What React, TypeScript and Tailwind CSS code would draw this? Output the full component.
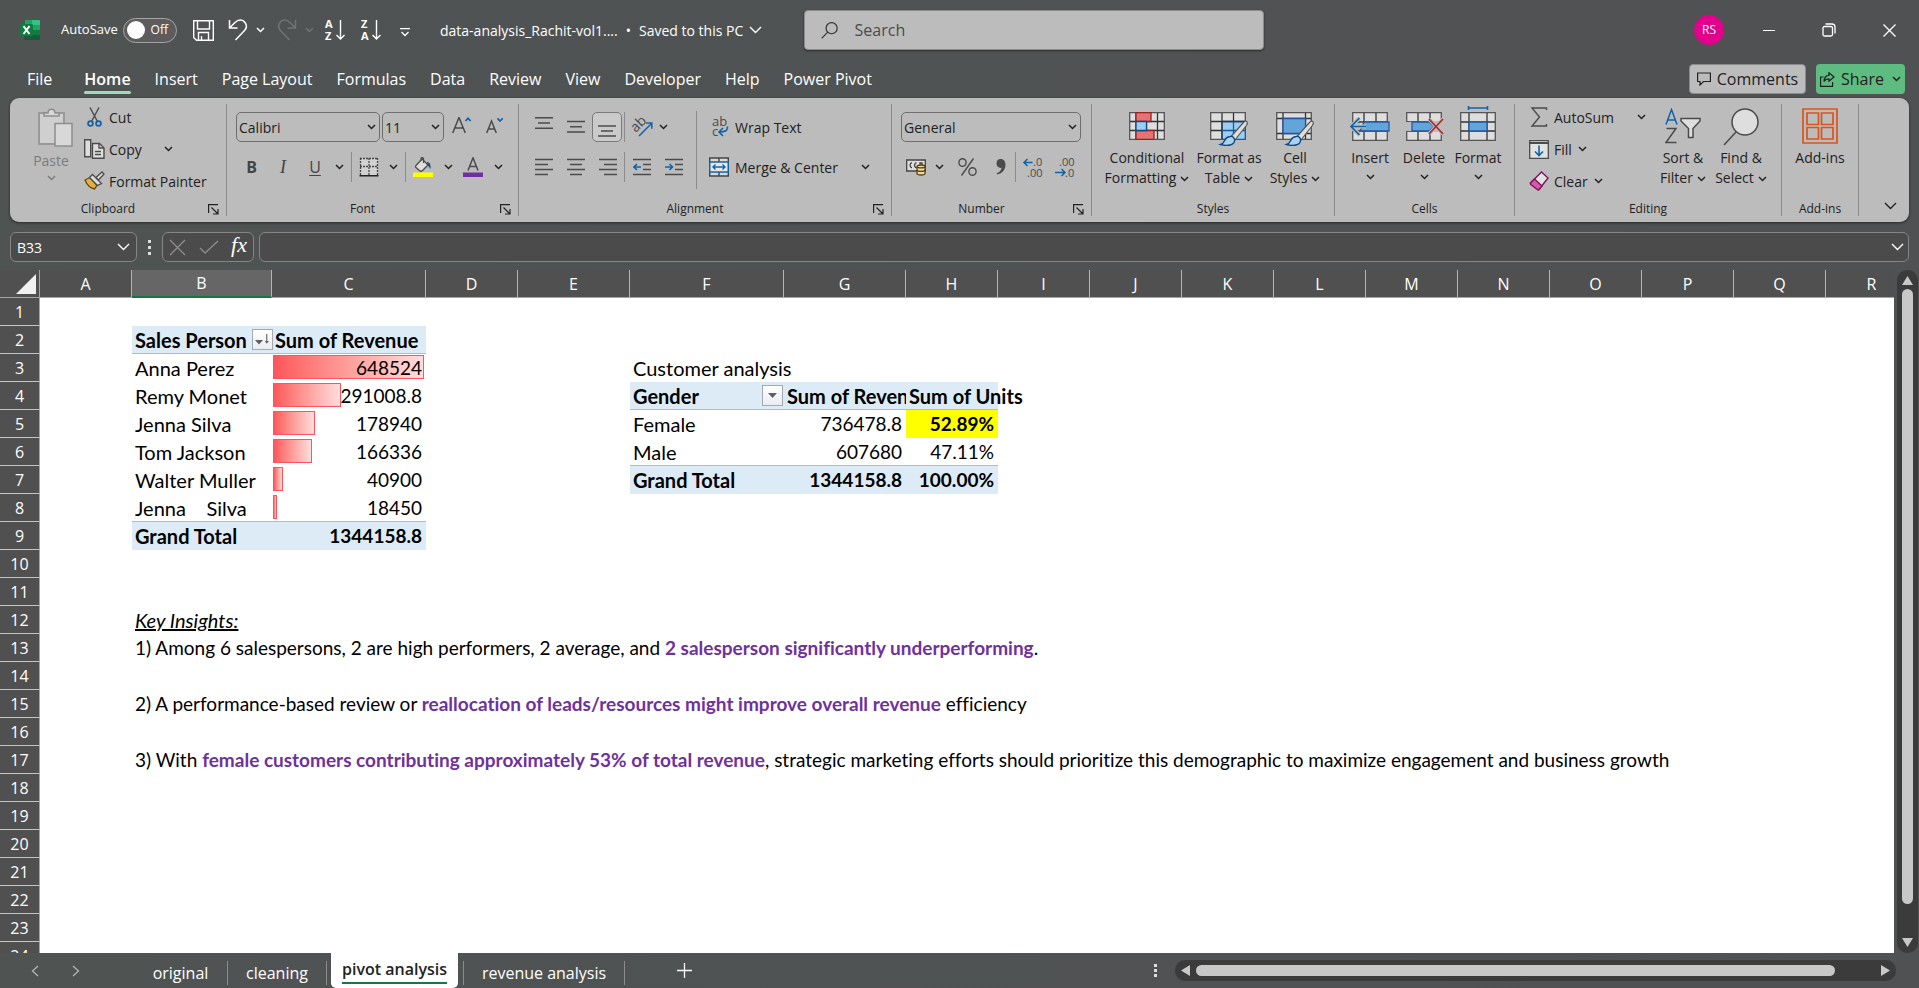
import React from "react";

type Kids = { children?: React.ReactNode };

/* ---------- small shared pieces ---------- */

function Chevron({ className = "" }: { className?: string }) {
  return (
    <svg className={`h-[6px] w-[9px] shrink-0 ${className}`} viewBox="0 0 9 6" fill="none" stroke="currentColor" strokeWidth="1.5">
      <path d="M1 1l3.500 3.500L8 1" />
    </svg>
  );
}

function WideChevron() {
  return (
    <svg className="h-[8px] w-[13px] shrink-0" viewBox="0 0 13 8" fill="none" stroke="currentColor" strokeWidth="1.4">
      <path d="M1 1l5.500 5.500L12 1" />
    </svg>
  );
}

function Divider() {
  return <div className="my-1.5 w-px shrink-0 bg-[#8b8b8b]" />;
}

function Rule() {
  return <div className="h-[30px] w-px shrink-0 bg-[#8b8b8b]" />;
}

function Group({ label, width, launcher, children }: Kids & { label: string; width: string; launcher?: boolean }) {
  return (
    <section aria-label={label} className={`flex shrink-0 flex-col pt-[3px] ${width}`}>
      <div className="flex h-24">{children}</div>
      <div className="flex h-6 items-center text-[12px]">
        <span className="flex-1 text-center">{label}</span>
        {launcher && (
          <button aria-label={`${label} settings`} className="w-5 pr-1">
            <svg className="ml-0.5 h-[11px] w-[11px]" viewBox="0 0 11 11" fill="none" stroke="#222" strokeWidth="1.2">
              <path d="M.6 9V.6H10M3.500 3.500L9.500 9.500M10 5v5H5" />
            </svg>
          </button>
        )}
      </div>
    </section>
  );
}

function Tool({ label, width, children }: Kids & { label: string; width: string }) {
  return (
    <button aria-label={label} className={`flex h-[30px] shrink-0 items-center justify-center ${width}`}>
      {children}
    </button>
  );
}

function Big({ icon, lines, width, drop, below }: { icon: React.ReactNode; lines: string[]; width: string; drop?: boolean; below?: boolean }) {
  return (
    <button className={`flex shrink-0 flex-col items-center pt-[5px] text-[14px] leading-5 ${width}`}>
      <span className="flex h-[42px] items-start">{icon}</span>
      {lines.map((t, i) => (
        <span key={t} className="flex items-center gap-1 whitespace-nowrap">
          {t}
          {drop && i === lines.length - 1 && <Chevron className="mt-px" />}
        </span>
      ))}
      {below && <Chevron className="mt-1.5" />}
    </button>
  );
}

/* ---------- icons ---------- */

function ExcelLogo() {
  return (
    <svg className="h-5 w-5" viewBox="0 0 20 20">
      <path d="M5 0h7v5H5z" fill="#21a366" />
      <path d="M12 0h7a1 1 0 011 1v4h-8z" fill="#33c481" />
      <path d="M4 5h8v5H4z" fill="#107c41" />
      <path d="M12 5h8v5h-8z" fill="#21a366" />
      <path d="M4 10h8v5H4z" fill="#185c37" />
      <path d="M12 10h8v5h-8z" fill="#107c41" />
      <path d="M4 15h16v4a1 1 0 01-1 1H5a1 1 0 01-1-1z" fill="#185c37" />
      <rect y="4" width="13" height="12" rx="1.2" fill="#107c41" />
      <path d="M3.500 6.200l6 7.800M9.500 6.200l-6 7.800" stroke="#fff" strokeWidth="1.900" />
    </svg>
  );
}

function SortIcon({ top, bottom }: { top: string; bottom: string }) {
  return (
    <svg className="h-[22px] w-[22px] overflow-visible" viewBox="0 0 22 22" fill="none" stroke="#fff" strokeWidth="1.4">
      <text x="1" y="9" fontSize="11" fontWeight="700" fill="#fff" stroke="none">{top}</text>
      <text x="1" y="21" fontSize="11" fontWeight="700" fill="#fff" stroke="none">{bottom}</text>
      <path d="M16.500 1v19M12.500 16l4 4 4-4" />
    </svg>
  );
}

function Lines({ rows }: { rows: [number, number, number][] }) {
  return (
    <svg className="h-[20px] w-[18px]" viewBox="0 0 18 20" stroke="#4b4b4b" strokeWidth="1.4">
      {rows.map(([x1, x2, y]) => (
        <path key={y} d={`M${x1} ${y}H${x2}`} />
      ))}
    </svg>
  );
}

function IndentIcon({ right }: { right?: boolean }) {
  return (
    <svg className="h-[20px] w-[18px]" viewBox="0 0 18 20" fill="none" stroke="#4b4b4b" strokeWidth="1.4">
      <path d="M0 2.500h18M10 7.500h8M10 12.500h8M0 17.500h18" />
      <path d={right ? "M0 10h7.500M4.500 7l3 3-3 3" : "M8 10H.8M4 7l-3 3 3 3"} stroke="#1063ab" strokeWidth="1.6" />
    </svg>
  );
}

function Brush() {
  return (
    <>
      <path d="M36 9c2 1 1.500 3 0 5L25 28l-4-3.500L33 11c1-1.200 2-2 3-2z" fill="#dedede" stroke="#555" strokeWidth="1.2" />
      <path d="M20 24.500c3-.5 5 1.500 4.500 4.500-.5 4-7 5.500-14 3.500 3-1 3.500-2.500 4.500-4.500 1-2.200 2.500-3.200 5-3.500z" fill="#a9d2f3" stroke="#104a82" strokeWidth="1.4" />
    </>
  );
}

function CondIcon() {
  return (
    <svg className="mt-1 h-[28px] w-[36px]" viewBox="0 0 36 28" strokeWidth="1.3">
      <path d="M.7.7h34.600v26.600H.7z" fill="#dedede" stroke="#555" />
      <path d="M7 1v26M28.500 1v26M1 9.500h34M1 18.500h34M17.500 10v9" stroke="#333" />
      <path d="M7 .7h15v8.800H7zM7 18.500h18v8.800H7z" fill="#e57373" stroke="#962222" />
      <path d="M7 9.500h10.500v9H7z" fill="#9dcdf2" stroke="#104a82" />
    </svg>
  );
}

function FormatTableIcon() {
  return (
    <svg className="mt-1 h-[34px] w-[38px]" viewBox="0 0 38 34" fill="none" strokeWidth="1.3">
      <path d="M.7.7h34.600v26.600H.7z" fill="#dedede" stroke="#555" />
      <path d="M12 9.500h23.300v17.800H12z" fill="#9dcdf2" stroke="#1a5a96" />
      <path d="M12 1v9M23.500 1v9M1 9.500h34M1 18.500h11M12 9v18" stroke="#333" />
      <path d="M23.500 10v17M12 18.500h23" stroke="#1a5a96" />
      <Brush />
    </svg>
  );
}

function CellStylesIcon() {
  return (
    <svg className="mt-1 h-[34px] w-[38px]" viewBox="0 0 38 34" fill="none" strokeWidth="1.3">
      <path d="M.7.7h34.600v26.600H.7z" fill="#dedede" stroke="#555" />
      <path d="M7 1v26M29.500 1v26M1 6.500h34M1 21.500h34" stroke="#333" />
      <path d="M7 6.500h22.500v15H7z" fill="#62a5d9" stroke="#2b50a8" />
      <Brush />
    </svg>
  );
}

function CellGrid({ kind }: { kind: "insert" | "delete" | "format" }) {
  return (
    <svg className="h-[36px] w-[40px] overflow-visible" viewBox="0 0 40 36" fill="none" strokeWidth="1.3">
      <path d="M2.700 4.700h34.600v27.600H2.700z" fill="#dedede" stroke="#555" />
      {kind === "format" ? (
        <>
          <path d="M11 5v27M29 5v27M3 14h34M3 23h34" stroke="#333" />
          <path d="M11 14h18v9H11z" fill="#62a5d9" stroke="#2459a8" />
          <path d="M10.500-2v4M29.500-2v4M10.500 0h19" stroke="#1063ab" strokeWidth="1.6" />
        </>
      ) : (
        <path d="M14 5v27M26 5v27M3 14h34M3 23h34" stroke="#333" />
      )}
      {kind === "insert" && (
        <>
          <path d="M1 15h9v7H1z" fill="#bcbcbc" />
          <path d="M14 14h25v9H10z" fill="#62a5d9" stroke="#2459a8" />
          <path d="M16 18.500H1M9.500 10L1 18.500 9.500 27" stroke="#bcbcbc" strokeWidth="4" />
          <path d="M16 18.500H1M9.500 10L1 18.500 9.500 27" stroke="#1063ab" strokeWidth="1.700" />
        </>
      )}
      {kind === "delete" && (
        <>
          <path d="M1 14h7v9H1zM29 13h10v11H29z" fill="#bcbcbc" />
          <path d="M8 14h17l5 4.500-5 4.500H8z" fill="#62a5d9" stroke="#2459a8" />
          <path d="M25 11l14 15M39 11L25 26" stroke="#bcbcbc" strokeWidth="4" />
          <path d="M25 11l14 15M39 11L25 26" stroke="#a92b2b" strokeWidth="1.700" />
        </>
      )}
    </svg>
  );
}

/* ---------- title bar ---------- */

function TitleBar() {
  return (
    <header className="flex h-[60px] shrink-0 items-center text-white">
      <div className="flex w-[804px] shrink-0 items-center pl-5">
        <ExcelLogo />
        <label className="ml-[21px] flex items-center gap-2 text-[13px]">
          <span className="w-[54px] whitespace-nowrap">AutoSave</span>
          <input type="checkbox" className="peer sr-only" />
          <span className="flex h-[25px] w-[54px] items-center justify-between rounded-full border border-[#a5a5a5] bg-[#5d5b5b] pl-[3px] pr-2 text-[12px]">
            <span className="h-[18px] w-[18px] rounded-full bg-white" />
            Off
          </span>
        </label>
        <button aria-label="Save" className="ml-4">
          <svg className="h-[21px] w-[21px]" viewBox="0 0 21 21" fill="none" stroke="#fff" strokeWidth="1.4">
            <path d="M.7.7h19.600v19.600H3.500L.7 17.500zM4.500 1v8h12V1M5.500 20v-7.500h10V20M8.500 20v-4" />
          </svg>
        </button>
        <button aria-label="Undo" className="ml-3.5 flex items-center gap-2">
          <svg className="h-[22px] w-[20px]" viewBox="0 0 20 22" fill="none" stroke="#fff" strokeWidth="1.500">
            <path d="M1.500 1v8h8M1.500 9l5.500-5.500c3.500-3.500 8-3 10 0 2 2.800 1.500 6-.5 8L7.500 21" />
          </svg>
          <Chevron />
        </button>
        <button aria-label="Redo" className="ml-3 flex items-center gap-2 text-[#727474]" disabled>
          <svg className="h-[22px] w-[20px]" viewBox="0 0 20 22" fill="none" stroke="currentColor" strokeWidth="1.500">
            <path d="M18.500 1v8h-8M18.500 9L13 3.500c-3.500-3.500-8-3-10 0-2 2.800-1.500 6 .5 8l9 9.500" />
          </svg>
          <Chevron />
        </button>
        <button aria-label="Sort A to Z" className="ml-2.5">
          <SortIcon top="A" bottom="Z" />
        </button>
        <button aria-label="Sort Z to A" className="ml-3.5">
          <SortIcon top="Z" bottom="A" />
        </button>
        <button aria-label="Customize toolbar" className="ml-[18px]">
          <svg className="mt-1 h-[9px] w-[10px]" viewBox="0 0 10 9" fill="none" stroke="#fff" strokeWidth="1.300">
            <path d="M0 .7h10M1.500 4L5 7.500 8.500 4" />
          </svg>
        </button>
        <button className="ml-[30px] flex items-center whitespace-nowrap text-[14px]">
          data-analysis_Rachit-vol1.... <span className="mx-2">•</span> Saved to this PC
          <span className="ml-1.5"><WideChevron /></span>
        </button>
      </div>
      <label className="flex h-10 w-[460px] items-center rounded-[4px] border border-[#8b8b8b] bg-[#bcbcbc] pl-4 shadow-[0_1px_2px_#2d2d2d]">
        <svg className="h-[19px] w-[19px]" viewBox="0 0 19 19" fill="none" stroke="#333" strokeWidth="1.300">
          <circle cx="11.500" cy="7" r="6" />
          <path d="M7.300 11.300L.7 18" />
        </svg>
        <input aria-label="Search" placeholder="Search" className="ml-4 w-full bg-transparent text-[16px] text-[#333] outline-none placeholder:text-[#4b4b4b]" />
      </label>
      <button className="ml-auto mr-[15px] flex h-[30px] w-[30px] items-center justify-center rounded-full bg-[#e3008c] text-[12px]">RS</button>
      <div className="flex">
        <button aria-label="Minimize" className="flex h-10 w-[60px] items-center justify-center">
          <span className="h-px w-3 bg-white" />
        </button>
        <button aria-label="Restore" className="flex h-10 w-[60px] items-center justify-center">
          <svg className="h-[14px] w-[14px]" viewBox="0 0 14 14" fill="none" stroke="#fff" strokeWidth="1.300">
            <rect x="1" y="3.500" width="9.500" height="9.500" rx="1.500" />
            <path d="M3.500 1h6.500a3 3 0 013 3v6.500" />
          </svg>
        </button>
        <button aria-label="Close" className="flex h-10 w-[60px] items-center justify-center">
          <svg className="h-[13px] w-[13px]" viewBox="0 0 13 13" fill="none" stroke="#fff" strokeWidth="1.300">
            <path d="M.5.500l12 12M12.500.500l-12 12" />
          </svg>
        </button>
      </div>
    </header>
  );
}

const menu = ["File", "Home", "Insert", "Page Layout", "Formulas", "Data", "Review", "View", "Developer", "Help", "Power Pivot"];

function MenuBar() {
  return (
    <nav className="flex h-[38px] shrink-0 items-center pl-[15px] pr-[14px] text-white">
      {menu.map((m) => (
        <button key={m} className={`flex flex-col whitespace-nowrap px-3 pt-[3px] text-[16px] leading-6 ${m === "File" ? "mr-2" : ""} ${m === "Home" ? "font-semibold" : ""}`}>
          {m}
          <span className={`h-[3px] w-full rounded-full ${m === "Home" ? "bg-[#9fdcb9]" : ""}`} />
        </button>
      ))}
      <div className="ml-auto flex gap-2.5 text-[16px] text-[#222]">
        <button className="flex h-[30px] w-[117px] items-center justify-center gap-1.5 rounded-[4px] border border-[#8b8b8b] bg-[#bcbcbc]">
          <svg className="h-[14px] w-[14px]" viewBox="0 0 14 14" fill="none" stroke="#222" strokeWidth="1.200">
            <path d="M.6 1h12.800v8.500H6.500L3 13V9.500H.6z" />
          </svg>
          Comments
        </button>
        <button className="flex h-[30px] w-[89px] items-center justify-center gap-1.5 rounded-[4px] bg-[#5fbc80]">
          <svg className="h-[15px] w-[15px]" viewBox="0 0 15 15" fill="none" stroke="#222" strokeWidth="1.200">
            <path d="M3.500 5H.6v9.400h12V10M9 .8l5 4.200-5 4.200V6.800c-2.500 0-4 1-5 2.700.2-4 2-6 5-6.300z" />
          </svg>
          Share
          <Chevron className="ml-0.5" />
        </button>
      </div>
    </nav>
  );
}

/* ---------- ribbon ---------- */

function Picker({ label, value, width }: { label: string; value: string; width: string }) {
  return (
    <div className={`relative h-[30px] shrink-0 ${width}`}>
      <select aria-label={label} defaultValue={value} className="h-full w-full appearance-none rounded-[5px] border border-[#6f6f6f] bg-transparent pl-0.5 text-[14px] text-[#222]">
        <option>{value}</option>
      </select>
      <Chevron className="pointer-events-none absolute right-1 top-3" />
    </div>
  );
}

function Clipboard() {
  return (
    <Group label="Clipboard" width="w-[216px]" launcher>
      <button className="ml-3 flex w-[58px] flex-col items-center pt-[7px] text-[14px] leading-5 text-[#7d7d7d]" disabled>
        <svg className="ml-2 h-[39px] w-[35px]" viewBox="0 0 35 39" stroke="#8e8e8e" strokeWidth="1.500">
          <path d="M1 5h25v31H1z" fill="#cfcfcf" stroke="#999" strokeWidth="2" />
          <path d="M6 8V5h4c0-5 7-5 7 0h4v3z" fill="#d8d8d8" />
          <path d="M17 15.500h17V38H17z" fill="#d8d8d8" />
        </svg>
        <span className="mt-1">Paste</span>
        <Chevron className="mt-1" />
      </button>
      <div className="ml-1 flex flex-col text-[14px]">
        <button className="flex h-8 items-center gap-1">
          <svg className="h-[20px] w-[21px]" viewBox="0 0 21 20" fill="none" stroke="#4b4b4b" strokeWidth="1.400">
            <path d="M6 .5l7.500 14M15 .5L7.500 14.500" />
            <circle cx="6.500" cy="16.500" r="2.400" stroke="#1063ab" strokeWidth="1.800" />
            <circle cx="14.500" cy="16.500" r="2.400" stroke="#1063ab" strokeWidth="1.800" />
          </svg>
          Cut
        </button>
        <button className="flex h-8 items-center gap-1">
          <svg className="h-[20px] w-[21px]" viewBox="0 0 21 20" fill="#dedede" stroke="#4b4b4b" strokeWidth="1.400">
            <path d="M.7.700h6v17h-6z" />
            <path d="M8.500 4.500h7l4.500 4.500v10.300H8.500z" />
            <path d="M15 4.500V9h5M11 12.500h6M11 15.500h6" fill="none" />
          </svg>
          Copy
          <Chevron className="ml-[18px]" />
        </button>
        <button className="flex h-8 items-center gap-1 whitespace-nowrap">
          <svg className="h-[20px] w-[21px]" viewBox="0 0 21 20" strokeWidth="1.300">
            <path d="M1 9l5-2.500 7 8L10.500 18C6 17 3 14 1 9z" fill="#e3b23c" stroke="#6b4a0e" />
            <path d="M5.500 6.500l3-3 9 9-4 2z" fill="#dedede" stroke="#4b4b4b" />
            <path d="M12 6.500L18 1l2 2-5.500 6z" fill="#dedede" stroke="#4b4b4b" />
          </svg>
          Format Painter
        </button>
      </div>
    </Group>
  );
}

function FontGroup() {
  return (
    <Group label="Font" width="w-[291px]" launcher>
      <div className="flex flex-col gap-2.5 pl-[9px] pt-[11px]">
        <div className="flex items-center gap-0.5">
          <Picker label="Font" value="Calibri" width="w-[144px]" />
          <Picker label="Font size" value="11" width="w-[62px]" />
          <Tool label="Increase font size" width="w-8">
            <svg className="h-[20px] w-[20px]" viewBox="0 0 20 20" fill="none" stroke="#4b4b4b" strokeWidth="1.500">
              <path d="M.7 16L7 .5 13.300 16M3 11h8" />
              <path d="M13.500 4L16 1.300 18.700 4" stroke="#1063ab" strokeWidth="1.700" />
            </svg>
          </Tool>
          <Tool label="Decrease font size" width="w-8">
            <svg className="h-[20px] w-[20px]" viewBox="0 0 20 20" fill="none" stroke="#4b4b4b" strokeWidth="1.500">
              <path d="M.7 16L5.500 4 10.300 16M2.500 12h6" />
              <path d="M11.500 1.300L14 4l2.700-2.700" stroke="#1063ab" strokeWidth="1.700" />
            </svg>
          </Tool>
        </div>
        <div className="flex items-center text-[16px] text-[#444]">
          <Tool label="Bold" width="w-[31px]"><b>B</b></Tool>
          <Tool label="Italic" width="w-8"><i className="font-['Liberation_Serif',serif] text-[18px]">I</i></Tool>
          <Tool label="Underline" width="w-8"><u className="underline-offset-2">U</u></Tool>
          <Tool label="Underline options" width="w-[17px]"><Chevron className="text-[#222]" /></Tool>
          <span className="ml-[3px]"><Rule /></span>
          <Tool label="Borders" width="w-[33px]">
            <svg className="h-[20px] w-[20px]" viewBox="0 0 20 20" fill="none" stroke="#444">
              <path d="M1 1h18v17H1z" fill="#d2d2d2" stroke="none" />
              <path d="M1 1.500h18M1 9.500h18M1.500 1v17M10 1v17M18.500 1v17" strokeDasharray="2 1" strokeWidth="1.300" />
              <path d="M.5 18.800h19" stroke="#222" strokeWidth="1.600" />
            </svg>
          </Tool>
          <Tool label="Border options" width="w-[17px]"><Chevron className="text-[#222]" /></Tool>
          <span className="ml-[3px]"><Rule /></span>
          <Tool label="Fill color" width="w-[34px]">
            <svg className="h-[20px] w-[20px]" viewBox="0 0 20 20">
              <path d="M3 8.500L9 2l6 6-5.500 5.500c-1 1-2 1-3 0L3 10.500c-.7-.7-.7-1.300 0-2z" fill="#dedede" stroke="#4b4b4b" strokeWidth="1.300" />
              <path d="M8 4V1.500C8 .2 10 .2 10.500 1.500V6" fill="none" stroke="#4b4b4b" strokeWidth="1.200" />
              <path d="M14 5c3 0 4 3 3.500 7-1.500-1-1.500-3-3-4z" fill="#1b4f80" />
              <path d="M0 15.500h20v4.500H0z" fill="#ffff00" />
            </svg>
          </Tool>
          <Tool label="Fill color options" width="w-[16px]"><Chevron className="text-[#222]" /></Tool>
          <Tool label="Font color" width="w-[34px]">
            <svg className="h-[20px] w-[20px]" viewBox="0 0 20 20" fill="none">
              <path d="M5 13.500L10 .8l5 12.700M6.800 9.500h6.400" stroke="#4b4b4b" strokeWidth="1.500" />
              <path d="M0 15.500h20v4.500H0z" fill="#7030a0" />
            </svg>
          </Tool>
          <Tool label="Font color options" width="w-[16px]"><Chevron className="text-[#222]" /></Tool>
        </div>
      </div>
    </Group>
  );
}

function Alignment() {
  return (
    <Group label="Alignment" width="w-[372px]" launcher>
      <div className="flex flex-col gap-2.5 pl-[9px] pt-[11px]">
        <div className="flex items-center">
          <Tool label="Top align" width="w-8"><Lines rows={[[0, 18, 0.7], [3, 15, 6], [0, 18, 11.3]]} /></Tool>
          <Tool label="Middle align" width="w-8"><Lines rows={[[0, 18, 4.5], [3, 15, 9.8], [0, 18, 15]]} /></Tool>
          <button aria-label="Bottom align" aria-pressed="true" className="flex h-[30px] w-[30px] items-center justify-center rounded-[5px] border border-[#7a7a7a] bg-[#cacaca]">
            <Lines rows={[[0, 18, 9], [3, 15, 14], [0, 18, 19]]} />
          </button>
          <span className="ml-0.5"><Rule /></span>
          <Tool label="Orientation" width="w-[34px]">
            <svg className="h-[22px] w-[22px] overflow-visible" viewBox="0 0 22 22" fill="none">
              <text x="2" y="15.500" fontSize="14" fill="#4b4b4b" transform="rotate(-45 5 13)">ab</text>
              <path d="M8 20L20.500 7.500M15 7h5.800v5.800" stroke="#1063ab" strokeWidth="1.500" />
            </svg>
          </Tool>
          <Chevron />
        </div>
        <div className="flex items-center">
          <Tool label="Align left" width="w-8"><Lines rows={[[0, 18, 2.5], [0, 13, 7.5], [0, 18, 12.5], [0, 13, 17.5]]} /></Tool>
          <Tool label="Center" width="w-8"><Lines rows={[[0, 18, 2.5], [3, 15, 7.5], [0, 18, 12.5], [3, 15, 17.5]]} /></Tool>
          <Tool label="Align right" width="w-8"><Lines rows={[[0, 18, 2.5], [5, 18, 7.5], [0, 18, 12.5], [5, 18, 17.5]]} /></Tool>
          <Rule />
          <Tool label="Decrease indent" width="w-[34px]"><IndentIcon /></Tool>
          <Tool label="Increase indent" width="w-[30px]"><IndentIcon right /></Tool>
        </div>
      </div>
      <div className="ml-[7px] mt-2.5 h-[78px] w-px bg-[#8b8b8b]" />
      <div className="ml-3 flex flex-1 flex-col gap-2.5 pt-[11px] text-[14px]">
        <button className="flex h-[30px] items-center gap-1.5">
          <svg className="h-[20px] w-[20px] overflow-visible" viewBox="0 0 20 20" fill="none">
            <text x="3" y="9" fontSize="13" fill="#4b4b4b">ab</text>
            <text x="3" y="19" fontSize="13" fill="#4b4b4b">c</text>
            <path d="M18.500 9.500c.5 4-2 5.500-8 5.500M14 11l-4 4 4 4" stroke="#1063ab" strokeWidth="1.600" />
          </svg>
          Wrap Text
        </button>
        <button className="flex h-[30px] items-center gap-1.5 whitespace-nowrap">
          <svg className="h-[20px] w-[20px]" viewBox="0 0 20 20" fill="none" strokeWidth="1.400">
            <path d="M.7 1h18.600v18H.7z" fill="#d8d8d8" stroke="#444" />
            <path d="M10 1v4M10 15v4" stroke="#444" />
            <path d="M.7 5h18.600v10H.7z" fill="#e8e8e8" stroke="#1063ab" strokeWidth="1.600" />
            <path d="M4 10h12M6.500 7.500L4 10l2.500 2.500M13.500 7.500L16 10l-2.500 2.500" stroke="#1063ab" />
          </svg>
          Merge &amp; Center
          <Chevron className="ml-auto mr-[21px]" />
        </button>
      </div>
    </Group>
  );
}

function NumberGroup() {
  return (
    <Group label="Number" width="w-[199px]" launcher>
      <div className="flex flex-col gap-2.5 pl-[9px] pt-[11px]">
        <Picker label="Number format" value="General" width="w-[180px]" />
        <div className="flex items-center">
          <Tool label="Accounting format" width="w-[30px]">
            <svg className="h-[18px] w-[20px]" viewBox="0 0 20 18" fill="none" strokeWidth="1.300">
              <path d="M.7 2h18.600v11H.7z" fill="#dedede" stroke="#444" />
              <path d="M6 5c-2.500-.5-2.500 5 0 4.500M10.500 5c-2.500-.5-2.500 5 0 4.500M14 7V5h2v3" stroke="#444" />
              <path d="M11 8.500c0-2 8-2 8 0v7c0 2-8 2-8 0z" fill="#e8d9a8" stroke="#5c420c" />
              <path d="M11 8.500c0 1.800 8 1.800 8 0M11 12c0 1.800 8 1.800 8 0" stroke="#5c420c" />
            </svg>
          </Tool>
          <Tool label="Accounting options" width="w-[16px]"><Chevron /></Tool>
          <Tool label="Percent style" width="w-[40px]">
            <svg className="h-[18px] w-[19px]" viewBox="0 0 19 18" fill="none" stroke="#4b4b4b" strokeWidth="1.400">
              <ellipse cx="4.500" cy="4.500" rx="3.600" ry="3.800" />
              <ellipse cx="14.500" cy="13.500" rx="3.600" ry="3.800" />
              <path d="M15.500.500l-12 17" />
            </svg>
          </Tool>
          <Tool label="Comma style" width="w-[28px]">
            <svg className="h-[16px] w-[10px]" viewBox="0 0 10 16" fill="#4b4b4b">
              <path d="M4.500 0C8 0 9.500 2.500 9.500 5.500c0 5-3 9-8.500 10l-.3-1.200C4 13 5.500 11 5.500 8.800 3 9.300.5 7.500.5 4.500.5 2 2 0 4.500 0z" />
            </svg>
          </Tool>
          <Rule />
          <Tool label="Increase decimal" width="w-[34px]">
            <svg className="h-[22px] w-[20px] overflow-visible" viewBox="0 0 20 22" fill="none">
              <text x="10" y="10" fontSize="11" fill="#4b4b4b">.0</text>
              <text x="4" y="21" fontSize="11" fill="#4b4b4b">.00</text>
              <path d="M9.500 6.500H1M4.500 3L1 6.500 4.500 10" stroke="#1063ab" strokeWidth="1.500" />
            </svg>
          </Tool>
          <Tool label="Decrease decimal" width="w-[30px]">
            <svg className="h-[22px] w-[20px] overflow-visible" viewBox="0 0 20 22" fill="none">
              <text x="4" y="10" fontSize="11" fill="#4b4b4b">.00</text>
              <text x="10" y="21" fontSize="11" fill="#4b4b4b">.0</text>
              <path d="M0 16.500h10M6.500 13L10 16.500l-3.500 3.500" stroke="#1063ab" strokeWidth="1.500" />
            </svg>
          </Tool>
        </div>
      </div>
    </Group>
  );
}

function Editing() {
  return (
    <Group label="Editing" width="w-[266px]">
      <div className="ml-[14px] flex w-[121px] flex-col text-[14px]">
        <button className="flex h-8 items-center gap-1">
          <svg className="h-[20px] w-[21px]" viewBox="0 0 21 20" fill="none" stroke="#4b4b4b" strokeWidth="1.400">
            <path d="M17.500 3V1H3l7.500 9L3 19h14.500v-2" />
          </svg>
          AutoSum
          <Chevron className="ml-auto mr-1" />
        </button>
        <button className="flex h-8 items-center gap-1">
          <svg className="h-[19px] w-[21px]" viewBox="0 0 21 19" fill="none" strokeWidth="1.300">
            <path d="M.7.700h18.600v17.600H.7z" fill="#e2e2e2" stroke="#4b4b4b" />
            <path d="M.7 3h18.600" stroke="#4b4b4b" strokeWidth="1.800" />
            <path d="M10 5.500v10M6 11.500l4 4 4-4" stroke="#1063ab" strokeWidth="1.600" />
          </svg>
          Fill
          <Chevron className="ml-0.5" />
        </button>
        <button className="flex h-8 items-center gap-1">
          <svg className="h-[20px] w-[21px]" viewBox="0 0 21 20" strokeWidth="1.400">
            <path d="M12.500 1l6.500 6-9 11.500-8.500-6.500z" fill="#e2e2e2" stroke="#7d1458" />
            <path d="M5.500 8l7.500 7-3 3.500c-.5.700-1 .7-1.700 0l-6.500-5c-.6-.5-.6-1 0-1.700z" fill="#d957ab" stroke="#7d1458" />
          </svg>
          Clear
          <Chevron className="ml-0.5" />
        </button>
      </div>
      <Big
        width="w-[60px] ml-[3px]"
        lines={["Sort &", "Filter"]}
        drop
        icon={
          <svg className="mt-0.5 h-[36px] w-[36px]" viewBox="0 0 36 36" fill="none" strokeWidth="1.500">
            <path d="M1 16.500L6.500 1.500 12 16.500M3 12h7" stroke="#1063ab" />
            <path d="M1.500 20.500h9.500L1 34.500h10.500" stroke="#4b4b4b" />
            <path d="M16 10.500h19v2.500l-7 7.500v9h-4.500v-9L16 13z" fill="#dedede" stroke="#4b4b4b" />
          </svg>
        }
      />
      <Big
        width="w-[56px]"
        lines={["Find &", "Select"]}
        drop
        icon={
          <svg className="mt-0.5 h-[38px] w-[36px]" viewBox="0 0 36 38" fill="none" stroke="#4b4b4b" strokeWidth="1.500">
            <circle cx="22" cy="14" r="13" fill="#dedede" />
            <path d="M13 24L1 37" />
          </svg>
        }
      />
    </Group>
  );
}

function Ribbon() {
  return (
    <div className="mx-[10px] flex h-[124px] shrink-0 overflow-hidden rounded-[9px] bg-[#bcbcbc] text-[#222] shadow-[0_1px_3px_#2a2a2a]">
      <Clipboard />
      <Divider />
      <FontGroup />
      <Divider />
      <Alignment />
      <Divider />
      <NumberGroup />
      <Divider />
      <Group label="Styles" width="w-[242px]">
        <Big width="w-[88px] ml-[11px]" lines={["Conditional", "Formatting"]} drop icon={<span className="pt-0.5"><CondIcon /></span>} />
        <Big width="w-[76px]" lines={["Format as", "Table"]} drop icon={<span className="pt-0.5"><FormatTableIcon /></span>} />
        <Big width="w-[56px]" lines={["Cell", "Styles"]} drop icon={<span className="pt-0.5"><CellStylesIcon /></span>} />
      </Group>
      <Divider />
      <Group label="Cells" width="w-[179px]">
        <Big width="w-[52px] ml-[9px]" lines={["Insert"]} below icon={<span className="pt-0.5"><CellGrid kind="insert" /></span>} />
        <Big width="w-[56px]" lines={["Delete"]} below icon={<span className="pt-0.5"><CellGrid kind="delete" /></span>} />
        <Big width="w-[52px]" lines={["Format"]} below icon={<span className="pt-0.5"><CellGrid kind="format" /></span>} />
      </Group>
      <Divider />
      <Editing />
      <Divider />
      <Group label="Add-ins" width="w-[76px]">
        <Big
          width="w-full"
          lines={["Add-ins"]}
          icon={
            <svg className="mt-0.5 h-[36px] w-[36px]" viewBox="0 0 36 36" fill="none" stroke="#d9531e" strokeWidth="1.700">
              <path d="M1 1h34v34H1zM5 5h11.500v11.500H5zM19.500 5H31v11.500H19.500zM5 19.500h11.500V31H5zM19.500 19.500H31V31H19.500z" />
            </svg>
          }
        />
      </Group>
      <Divider />
      <button aria-label="Collapse ribbon" className="mb-3 ml-auto mr-3 self-end">
        <WideChevron />
      </button>
    </div>
  );
}

/* ---------- formula bar ---------- */

function FormulaBar() {
  const box = "flex h-[30px] items-center rounded-[6px] border border-[#858585] bg-[#4b4b4b]";
  return (
    <div className="mx-[10px] mt-[10px] flex h-[38px] shrink-0 items-start text-white">
      <div className={`${box} w-[127px] pr-1.5`}>
        <input aria-label="Name box" defaultValue="B33" className="w-full min-w-0 bg-transparent pl-1.5 text-[14px] outline-none" />
        <WideChevron />
      </div>
      <div className="flex h-[30px] w-[25px] flex-col items-center justify-center gap-[3px]">
        <span className="h-[3px] w-[3px] bg-[#ddd]" />
        <span className="h-[3px] w-[3px] bg-[#ddd]" />
        <span className="h-[3px] w-[3px] bg-[#ddd]" />
      </div>
      <div className={`${box} w-[92px] justify-between px-1.5`}>
        <button aria-label="Cancel">
          <svg className="h-[17px] w-[17px]" viewBox="0 0 17 17" fill="none" stroke="#8e8e8e" strokeWidth="1.300">
            <path d="M1 1l15 15M16 1L1 16" />
          </svg>
        </button>
        <button aria-label="Enter">
          <svg className="h-[14px] w-[20px]" viewBox="0 0 20 14" fill="none" stroke="#8e8e8e" strokeWidth="1.300">
            <path d="M1 8l5 5L19 1" />
          </svg>
        </button>
        <button aria-label="Insert function" className="pb-1 font-['Liberation_Serif',serif] text-[22px] italic leading-6">fx</button>
      </div>
      <div className={`${box} ml-[5px] flex-1 pr-1`}>
        <input aria-label="Formula" className="w-full bg-transparent px-2 text-[14px] outline-none" />
        <WideChevron />
      </div>
    </div>
  );
}

/* ---------- sheet ---------- */

const columns: [string, string][] = [
  ["A", "w-[92px]"], ["B", "w-[140px]"], ["C", "w-[154px]"], ["D", "w-[92px]"], ["E", "w-[112px]"], ["F", "w-[154px]"],
  ["G", "w-[122px]"], ["H", "w-[92px]"], ["I", "w-[92px]"], ["J", "w-[92px]"], ["K", "w-[92px]"], ["L", "w-[92px]"],
  ["M", "w-[92px]"], ["N", "w-[92px]"], ["O", "w-[92px]"], ["P", "w-[92px]"], ["Q", "w-[92px]"], ["R", "w-[92px]"],
];

const band = "bg-[#ddebf7] font-bold";
const under = "border-b border-[#9bc2e6]";
const over = "shadow-[0_-1px_0_#9bc2e6]";
const num = "pr-1 text-right text-[19px]";

type Cell = { body: React.ReactNode; cls?: string };

function FilterButton({ sorted }: { sorted?: boolean }) {
  return (
    <button aria-label="Filter" className="flex h-[21px] w-[21px] shrink-0 items-center justify-center border border-[#a3a9b1] bg-gradient-to-b from-white to-[#e9edf2]">
      {sorted ? (
        <svg className="h-[13px] w-[15px]" viewBox="0 0 15 13" fill="#5f5f5f">
          <path d="M0 7h8L4 11.500zM11.200 1h1.100v9h-1.100zM9.800 8h4l-2 2.800z" />
        </svg>
      ) : (
        <svg className="h-[5px] w-[9px]" viewBox="0 0 9 5" fill="#5f5f5f">
          <path d="M0 0h9L4.500 5z" />
        </svg>
      )}
    </button>
  );
}

const people: [string, number][] = [
  ["Anna Perez", 648524],
  ["Remy Monet", 291008.8],
  ["Jenna Silva", 178940],
  ["Tom Jackson", 166336],
  ["Walter Muller", 40900],
  ["Jenna    Silva", 18450],
];

function Purple({ children }: Kids) {
  return <b className="text-[#7030a0]">{children}</b>;
}

const insight = "pl-[3px] text-[19px]";

const cells: Record<string, Cell> = {
  B2: {
    body: <span className="flex items-center justify-between">Sales Person <FilterButton sorted /></span>,
    cls: `${band} ${under} pl-[3px] pr-px`,
  },
  C2: { body: "Sum of Revenue", cls: `${band} ${under} pl-[3px]` },
  B9: { body: "Grand Total", cls: `${band} ${over} pl-[3px]` },
  C9: { body: "1344158.8", cls: `${band} ${over} ${num}` },
  F3: { body: "Customer analysis" },
  F4: {
    body: <span className="flex items-center justify-between">Gender <FilterButton /></span>,
    cls: `${band} ${under} pl-[3px] pr-px`,
  },
  G4: { body: "Sum of Revenue", cls: `${band} ${under} overflow-hidden pl-[3px]` },
  H4: { body: "Sum of Units", cls: `${band} ${under} pl-[3px]` },
  F5: { body: "Female" },
  G5: { body: "736478.8", cls: num },
  H5: { body: "52.89%", cls: `bg-[#ffff00] font-bold ${num}` },
  F6: { body: "Male" },
  G6: { body: "607680", cls: num },
  H6: { body: "47.11%", cls: num },
  F7: { body: "Grand Total", cls: `${band} ${over} pl-[3px]` },
  G7: { body: "1344158.8", cls: `${band} ${over} ${num}` },
  H7: { body: "100.00%", cls: `${band} ${over} ${num}` },
  B12: { body: <i className="underline">Key Insights:</i> },
  B13: {
    body: <>1) Among 6 salespersons, 2 are high performers, 2 average, and <Purple>2 salesperson significantly underperforming</Purple>.</>,
    cls: insight,
  },
  B15: {
    body: <>2) A performance-based review or <Purple>reallocation of leads/resources might improve overall revenue</Purple> efficiency</>,
    cls: insight,
  },
  B17: {
    body: <>3) With <Purple>female customers contributing approximately 53% of total revenue</Purple>, strategic marketing efforts should prioritize this demographic to maximize engagement and business growth</>,
    cls: insight,
  },
};

people.forEach(([name, revenue], i) => {
  cells[`B${i + 3}`] = { body: name };
  cells[`C${i + 3}`] = {
    body: (
      <span className="relative block h-7 leading-7">
        <span className="absolute inset-y-px left-px right-0.5">
          <span
            className="block h-6 border border-[#ff555a] bg-gradient-to-r from-[#ff555a] to-[#ffdddd]"
            style={{ width: `${(revenue / people[0][1]) * 100}%` }}
          />
        </span>
        <span className="relative pr-1">{revenue}</span>
      </span>
    ),
    cls: "text-right text-[19px]",
  };
});

function Sheet() {
  const rows = Array.from({ length: 24 }, (_, i) => i + 1);
  return (
    <div className="flex min-h-0 flex-1">
      <div className="min-w-0 flex-1 overflow-hidden bg-white">
        <table className="w-px table-fixed border-separate border-spacing-0 whitespace-pre font-[Lato,sans-serif] text-[20px] leading-6 text-black [font-variant-ligatures:none]">
          <colgroup>
            <col className="w-10" />
            {columns.map(([c, w]) => (
              <col key={c} className={w} />
            ))}
          </colgroup>
          <thead>
            <tr className="h-7 bg-[#505050] font-['Open_Sans',sans-serif] text-[16px] text-white">
              <th className="border-b border-r border-[#a5a5a5] p-0">
                <svg aria-label="Select all" className="ml-auto mr-[3px] h-[20px] w-[20px]" viewBox="0 0 20 20">
                  <path d="M20 0v20H0z" fill="#f0f0f0" />
                </svg>
              </th>
              {columns.map(([c]) => (
                <th
                  key={c}
                  className={
                    c === "B"
                      ? "border-b-2 border-r border-b-[#1e7145] border-r-[#b5b5b5] bg-[#666] p-0 font-normal"
                      : "border-b border-r border-b-[#a5a5a5] border-r-[#b5b5b5] p-0 font-normal"
                  }
                >
                  {c}
                </th>
              ))}
            </tr>
          </thead>
          <tbody>
            {rows.map((r) => (
              <tr key={r} className="h-7">
                <th className="border-b border-r border-b-[#c4c4c4] border-r-[#a5a5a5] bg-[#505050] p-0 font-['Open_Sans',sans-serif] text-[16px] font-normal text-white">
                  {r}
                </th>
                {columns.map(([c]) => {
                  const cell = cells[`${c}${r}`];
                  return (
                    <td key={c} className={cell ? `py-0 ${cell.cls ?? "pl-[3px]"}` : "p-0"}>
                      {cell?.body}
                    </td>
                  );
                })}
              </tr>
            ))}
          </tbody>
        </table>
      </div>
      <div className="ml-[3px] mr-px flex w-[21px] flex-col items-center rounded-[10px] bg-[#3b3b3b] py-1.5">
        <button aria-label="Scroll up">
          <svg className="h-[9px] w-[11px]" viewBox="0 0 11 9" fill="#c8c8c8"><path d="M5.500 0L11 9H0z" /></svg>
        </button>
        <div className="mt-1 w-[11px] flex-[617] rounded-full bg-[#c8c8c8]" />
        <div className="flex-[34]" />
        <button aria-label="Scroll down">
          <svg className="h-[9px] w-[11px]" viewBox="0 0 11 9" fill="#c8c8c8"><path d="M0 0h11L5.500 9z" /></svg>
        </button>
      </div>
    </div>
  );
}

/* ---------- sheet tabs ---------- */

function TabBar() {
  const tab = "flex h-full items-center justify-center whitespace-nowrap pt-1";
  return (
    <footer className="flex h-[35px] shrink-0 items-center text-[16px] text-white">
      <button aria-label="Previous sheet" className="ml-[31px]">
        <svg className="h-[12px] w-[8px]" viewBox="0 0 8 12" fill="none" stroke="#b5b5b5" strokeWidth="1.300"><path d="M7 1L1.500 6 7 11" /></svg>
      </button>
      <button aria-label="Next sheet" className="ml-[33px]">
        <svg className="h-[12px] w-[8px]" viewBox="0 0 8 12" fill="none" stroke="#b5b5b5" strokeWidth="1.300"><path d="M1 1l5.500 5L1 11" /></svg>
      </button>
      <button className={`${tab} ml-[54px] w-[93px]`}>original</button>
      <span className="mt-1 h-6 w-px bg-[#8b8b8b]" />
      <button className={`${tab} w-[98px]`}>cleaning</button>
      <span className="mt-1 h-6 w-px bg-[#8b8b8b]" />
      <button className="ml-1 flex h-full w-[127px] flex-col items-center rounded-b-[5px] bg-white pt-[3px] font-semibold text-[#222]">
        <span className="border-b-2 border-[#107c41] leading-[26px]">pivot analysis</span>
      </button>
      <span className="ml-[5px] mt-1 h-6 w-px bg-[#8b8b8b]" />
      <button className={`${tab} w-[160px]`}>revenue analysis</button>
      <span className="mt-1 h-6 w-px bg-[#8b8b8b]" />
      <button aria-label="New sheet" className="ml-[52px]">
        <svg className="h-[15px] w-[15px]" viewBox="0 0 15 15" stroke="#fff" strokeWidth="1.300"><path d="M7.500 0v15M0 7.500h15" /></svg>
      </button>
      <div className="ml-auto mr-[23px] flex w-[742px] items-center gap-[18px]">
        <span className="flex flex-col gap-0.5">
          <span className="h-[3px] w-[3px] bg-[#ddd]" />
          <span className="h-[3px] w-[3px] bg-[#ddd]" />
          <span className="h-[3px] w-[3px] bg-[#ddd]" />
        </span>
        <div className="flex h-[21px] flex-1 items-center rounded-[10px] bg-[#3b3b3b] px-1.5">
          <button aria-label="Scroll left">
            <svg className="h-[11px] w-[9px]" viewBox="0 0 9 11" fill="#c8c8c8"><path d="M9 0v11L0 5.500z" /></svg>
          </button>
          <div className="ml-1.5 h-[11px] flex-[639] rounded-full bg-[#c8c8c8]" />
          <div className="flex-[46]" />
          <button aria-label="Scroll right">
            <svg className="h-[11px] w-[9px]" viewBox="0 0 9 11" fill="#c8c8c8"><path d="M0 0v11l9-5.500z" /></svg>
          </button>
        </div>
      </div>
    </footer>
  );
}

export default function App() {
  return (
    <div className="flex h-screen w-full flex-col overflow-hidden bg-gradient-to-r from-[#4f5352] to-[#505153] font-['Open_Sans','Noto_Sans',sans-serif]">
      <TitleBar />
      <MenuBar />
      <Ribbon />
      <FormulaBar />
      <Sheet />
      <TabBar />
    </div>
  );
}
